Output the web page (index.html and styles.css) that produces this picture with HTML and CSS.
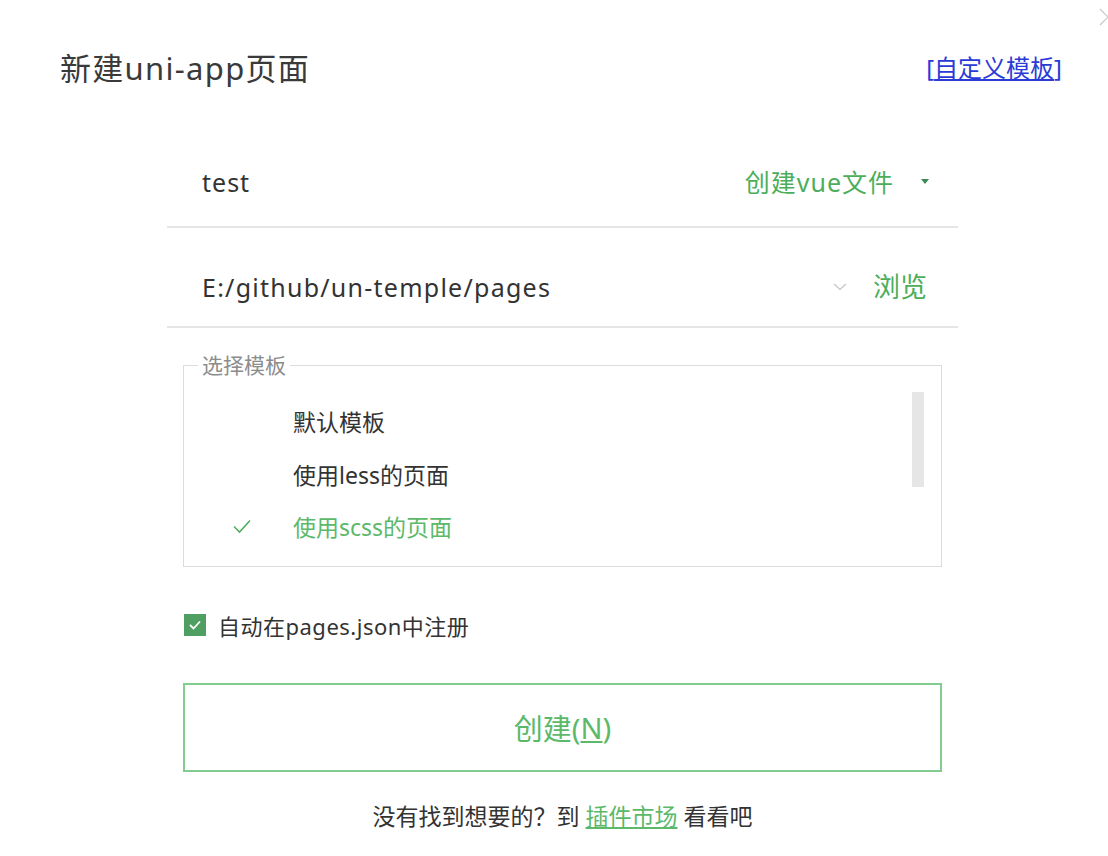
FILE: index.html
```html
<!DOCTYPE html>
<html lang="zh-CN">
<head>
<meta charset="utf-8">
<title>新建uni-app页面</title>
<link rel="stylesheet" href="styles.css">
</head>
<body>
<div class="dialog">
  <svg class="close" width="18" height="18" viewBox="0 0 18 18"><path d="M1 1 L17 17 M17 1 L1 17" stroke="#c8c8c8" stroke-width="1.2" fill="none"/></svg>
  <header class="head">
    <h1 class="title">新建uni-app页面</h1>
    <a class="custom" href="#">[<span class="u">自定义模板</span>]</a>
  </header>
  <main class="form">
    <div class="row row-name">
      <span class="value">test</span>
      <span class="spacer"></span>
      <span class="green kind">创建vue文件</span>
      <svg class="tri" width="10" height="6" viewBox="0 0 10 6"><path d="M1 0 L9 0 L5 5 Z" fill="#3d8a55"/></svg>
    </div>
    <div class="row row-path">
      <span class="value path">E:/github/un-temple/pages</span>
      <span class="spacer"></span>
      <svg class="chev" width="14" height="8" viewBox="0 0 14 8"><path d="M1 1 L7 6.5 L13 1" stroke="#c4c4c4" stroke-width="1.2" fill="none"/></svg>
      <span class="green browse">浏览</span>
    </div>
    <fieldset class="tpl">
      <legend class="legend">选择模板</legend>
      <div class="tpl-body">
        <ul class="list">
          <li class="item"><span class="mark"></span>默认模板</li>
          <li class="item"><span class="mark"></span>使用less的页面</li>
          <li class="item active"><span class="mark"><svg width="20" height="16" viewBox="0 0 20 16"><path d="M2 8.5 L7.5 14 L18 2.5" stroke="#4caf60" stroke-width="1.6" fill="none"/></svg></span>使用scss的页面</li>
        </ul>
        <div class="track"><div class="thumb"></div></div>
      </div>
    </fieldset>
    <label class="check-row">
      <span class="box"><svg width="14" height="12" viewBox="0 0 14 12"><path d="M2 6 L5.5 9.5 L12 2.5" stroke="#fff" stroke-width="1.8" fill="none"/></svg></span>
      <span class="check-text">自动在pages.json中注册</span>
    </label>
    <div class="create" role="button">创建(<span class="u">N</span>)</div>
    <p class="foot">没有找到想要的？到 <a class="market" href="#">插件市场</a> 看看吧</p>
  </main>
</div>
</body>
</html>
```
FILE: styles.css
```css
* { box-sizing: border-box; }
html, body {
  margin: 0;
  padding: 0;
  background: #fff;
  overflow: hidden;
}
body {
  font-family: "Noto Sans", "Noto Sans CJK SC", sans-serif;
  color: #333;
}
.dialog {
  position: relative;
  width: 1108px;
  height: 856px;
}
.close {
  position: absolute;
  left: 1099px;
  top: 8px;
}
.head {
  display: flex;
  align-items: center;
  justify-content: space-between;
  padding: 48px 46px 0 60px;
  height: 88px;
}
.title {
  margin: 0;
  font-size: 31px;
  font-weight: 400;
  line-height: 40px;
  letter-spacing: 1.3px;
  color: #3a3a3a;
}
.custom {
  font-size: 24px;
  line-height: 30px;
  color: #2b3bd6;
  text-decoration: none;
}
.custom .u { text-decoration: underline; }
.form {
  width: 791px;
  margin: 0 0 0 167px;
  display: flex;
  flex-direction: column;
}
.row {
  display: flex;
  align-items: center;
  padding: 0 31px 0 35px;
  border-bottom: 2px solid #e6e6e6;
  font-size: 25px;
  line-height: 40px;
}
.row-name {
  margin-top: 74px;
  height: 66px;
  padding-bottom: 24px;
  padding-top: 0;
}
.row-path {
  margin-top: 39px;
  height: 61px;
  padding-bottom: 19px;
}
.spacer { flex: 1; }
.value { color: #333; letter-spacing: 1px; }
.path { letter-spacing: 1.25px; }
.green { color: #4cae5b; }
.kind { letter-spacing: 1px; }
.tri { margin-left: 26px; margin-right: -3px; }
.chev { margin-right: 26px; }
.browse { font-size: 27px; }
.tpl {
  margin: 25px 16px 0 16px;
  padding: 0;
  border: 1px solid #dcdcdc;
  min-width: 0;
}
.legend {
  margin-left: 14px;
  padding: 0 4px;
  font-size: 21px;
  line-height: 24px;
  color: #8c8c8c;
}
.tpl-body {
  display: flex;
}
.list {
  list-style: none;
  margin: 0;
  padding: 18px 0 13px 0;
  flex: 1;
}
.item {
  display: flex;
  align-items: center;
  height: 52.5px;
  font-size: 23px;
  color: #333;
}
.item.active { color: #5cb96a; }
.mark {
  width: 109px;
  padding-left: 48px;
  display: flex;
  align-items: center;
}
.track {
  width: 12px;
  margin-right: 17px;
  padding-top: 15px;
}
.thumb {
  height: 95px;
  background: #e6e6e6;
}
.check-row {
  display: flex;
  align-items: center;
  gap: 12px;
  margin: 38px 16px 0 17px;
  height: 40px;
  font-size: 22px;
  color: #333;
}
.check-text { letter-spacing: 0.5px; }
.box {
  width: 22px;
  height: 22px;
  background: #4f9e62;
  display: flex;
  align-items: center;
  justify-content: center;
}
.create {
  margin: 38px 16px 0 16px;
  height: 89px;
  border: 2px solid #82cc90;
  background: #fff;
  display: flex;
  align-items: center;
  justify-content: center;
  font-size: 29px;
  color: #5cb96a;
  cursor: pointer;
}
.create .u { text-decoration: underline; }
.foot {
  margin: 24px 0 0 0;
  text-align: center;
  font-size: 23px;
  line-height: 40px;
  color: #333;
}
.market {
  color: #5cb96a;
  text-decoration: underline;
}
```
